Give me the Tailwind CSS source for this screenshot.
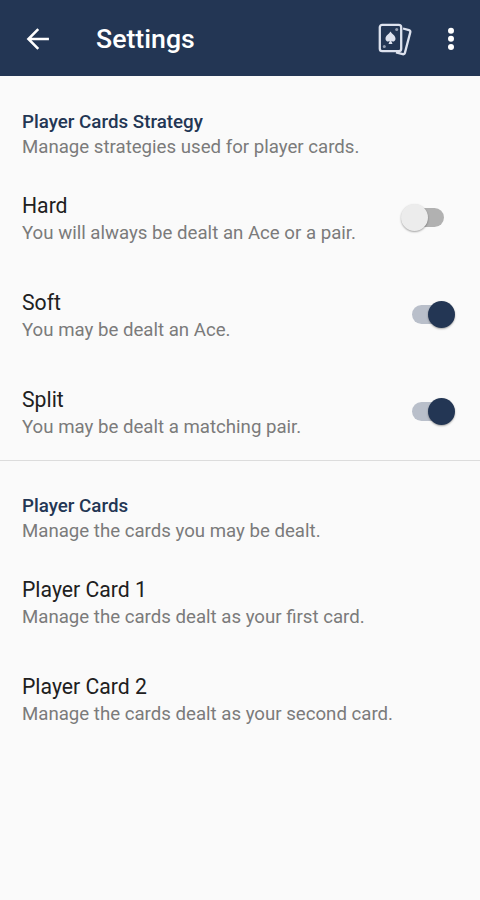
<!DOCTYPE html>
<html lang="en">
<head>
  <meta charset="UTF-8" />
  <meta name="viewport" content="width=device-width, initial-scale=1.0"/>
  <title>Settings</title>
  <script src="https://cdn.jsdelivr.net/npm/@tailwindcss/browser@4"></script>
</head>
<body class="bg-[#fafafa] min-h-screen font-['Roboto',sans-serif] text-[#202020]">

  <!-- App bar -->
  <header class="bg-[#233654] h-[76px] flex items-center pl-[22px] pr-[13px] text-white">
    <svg class="w-8 h-8 mt-[2px]" viewBox="0 0 24 24" fill="none" stroke="currentColor" stroke-width="1.9">
      <path d="M20.2 12H5.2M12.2 4.6L4.8 12l7.4 7.4"/>
    </svg>
    <h1 class="ml-[42px] mt-[2px] text-[26.7px] leading-8 font-medium">Settings</h1>
    <svg class="ml-auto w-9 h-9 mt-[3px] text-[#dde2ee]" viewBox="0 0 36 36" fill="none" stroke="currentColor" stroke-width="2.3" stroke-linejoin="round">
      <path d="M25 6.5l6 1.6a1.8 1.8 0 0 1 1.3 2.2l-5.4 20.6a1.8 1.8 0 0 1-2.2 1.3l-6.7-1.8"/>
      <rect x="1.8" y="2.8" width="21.4" height="26.4" rx="2.4"/>
      <path d="M12.5 9.5c1.2 2.3 5 4 5 7.2 0 2.8-3 3.6-4.3 2l1.3 3.3h-4l1.3-3.3c-1.3 1.6-4.3.8-4.3-2 0-3.2 3.8-4.9 5-7.2z" fill="currentColor" stroke="none"/>
      <circle cx="18.7" cy="7.4" r="1.5" fill="currentColor" stroke="none" opacity=".6"/>
      <circle cx="6.3" cy="24.6" r="1.5" fill="currentColor" stroke="none" opacity=".6"/>
    </svg>
    <svg class="ml-[21px] w-8 h-8 mt-[2px]" viewBox="0 0 32 32" fill="currentColor">
      <circle cx="16" cy="7.7" r="3"/>
      <circle cx="16" cy="15.8" r="3"/>
      <circle cx="16" cy="23.9" r="3"/>
    </svg>
  </header>

  <main>
    <!-- Strategy -->
    <section class="border-b border-[#dcdcdc] h-[385px]">
      <div class="h-[95px] pt-[34px] pl-[22px]">
        <h2 class="text-[18.75px] leading-[25px] font-medium text-[#233654]">Player Cards Strategy</h2>
        <p class="text-[18.65px] leading-[25px] text-[#7b7b7b]">Manage strategies used for player cards.</p>
      </div>
      <div class="h-[97px] pt-[21px] pl-[22px] pr-[25px] flex justify-between">
        <div>
          <h3 class="text-[21.2px] leading-[27px]">Hard</h3>
          <p class="mt-px text-[18.65px] leading-[27px] text-[#7b7b7b]">You will always be dealt an Ace or a pair.</p>
        </div>
        <div class="w-[54px] h-[27px] mt-3 flex items-center">
          <span class="w-[27px] h-[27px] rounded-full bg-[#ececec] shadow-[0_1px_2px_rgba(0,0,0,0.35)] z-10"></span>
          <span class="w-[29px] h-[19px] -ml-[13px] rounded-r-full bg-[#b1b1b1]"></span>
        </div>
      </div>
      <div class="h-[97px] pt-[21px] pl-[22px] pr-[25px] flex justify-between">
        <div>
          <h3 class="text-[21.2px] leading-[27px]">Soft</h3>
          <p class="mt-px text-[18.65px] leading-[27px] text-[#7b7b7b]">You may be dealt an Ace.</p>
        </div>
        <div class="h-[27px] mt-3 flex items-center">
          <span class="w-[29px] h-[19px] -mr-[13px] rounded-l-full bg-[#b9bfca]"></span>
          <span class="w-[27px] h-[27px] rounded-full bg-[#233654] shadow-[0_1px_2px_rgba(0,0,0,0.35)] z-10"></span>
        </div>
      </div>
      <div class="h-[95px] pt-[21px] pl-[22px] pr-[25px] flex justify-between">
        <div>
          <h3 class="text-[21.2px] leading-[27px]">Split</h3>
          <p class="mt-px text-[18.65px] leading-[27px] text-[#7b7b7b]">You may be dealt a matching pair.</p>
        </div>
        <div class="h-[27px] mt-3 flex items-center">
          <span class="w-[29px] h-[19px] -mr-[13px] rounded-l-full bg-[#b9bfca]"></span>
          <span class="w-[27px] h-[27px] rounded-full bg-[#233654] shadow-[0_1px_2px_rgba(0,0,0,0.35)] z-10"></span>
        </div>
      </div>
    </section>

    <!-- Cards -->
    <section>
      <div class="h-[94px] pt-[33px] pl-[22px]">
        <h2 class="text-[18.75px] leading-[25px] font-medium text-[#233654]">Player Cards</h2>
        <p class="text-[18.65px] leading-[25px] text-[#7b7b7b]">Manage the cards you may be dealt.</p>
      </div>
      <div class="h-[97px] pt-[21px] pl-[22px]">
        <h3 class="text-[21.2px] leading-[27px]">Player Card 1</h3>
        <p class="mt-px text-[18.65px] leading-[27px] text-[#7b7b7b]">Manage the cards dealt as your first card.</p>
      </div>
      <div class="h-[97px] pt-[21px] pl-[22px]">
        <h3 class="text-[21.2px] leading-[27px]">Player Card 2</h3>
        <p class="mt-px text-[18.65px] leading-[27px] text-[#7b7b7b]">Manage the cards dealt as your second card.</p>
      </div>
    </section>
  </main>

</body>
</html>
